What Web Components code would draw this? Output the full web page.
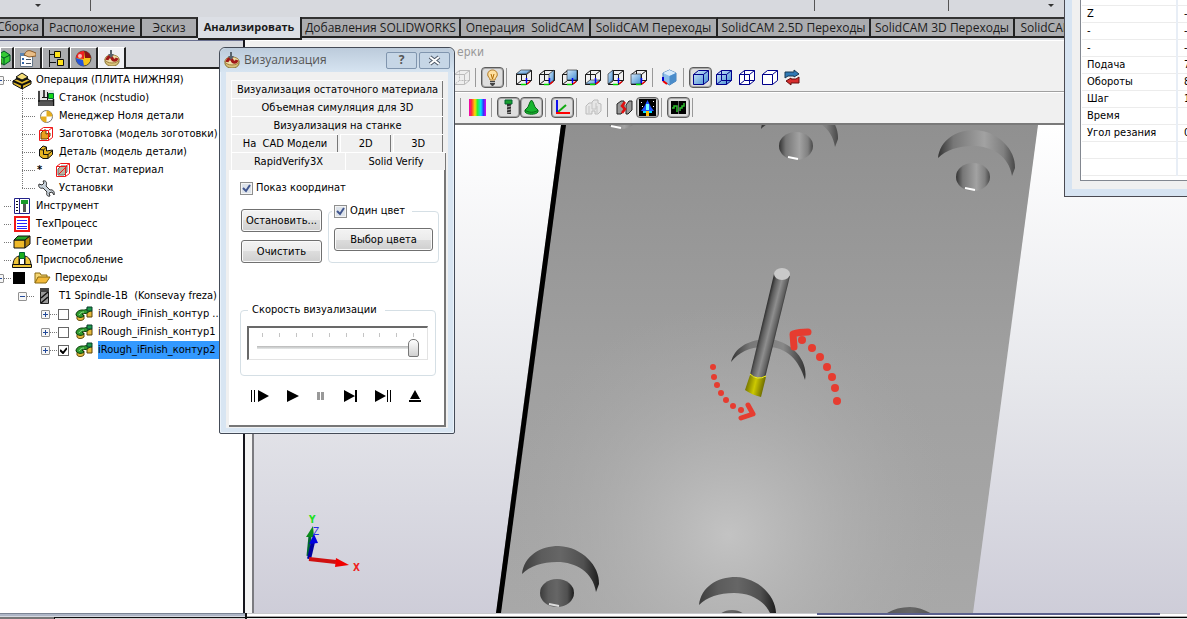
<!DOCTYPE html>
<html lang="ru">
<head>
<meta charset="utf-8">
<title>SolidCAM</title>
<style>
html,body{margin:0;height:100%}
body{font:11px/18px "DejaVu Sans Condensed","DejaVu Sans",sans-serif;color:#000;background:#f0f0f0;overflow:hidden}
</style>
</head>
<body>
<cam-app></cam-app>
<script>
const S=(w,h,body)=>`<svg xmlns="http://www.w3.org/2000/svg" width="${w}" height="${h}" viewBox="0 0 ${w} ${h}" aria-hidden="true">${body}</svg>`;
const FACES={top:'1,5 6,1 16,1 11,5',right:'11,5 16,1 16,11 11,15',back:'6,1 16,1 16,11 6,11',bottom:'1,15 6,11 16,11 11,15',left:'1,5 6,1 6,11 1,15',front:'1,5 11,5 11,15 1,15'};
const GB='<linearGradient id="g" x1="0" y1="0" x2="1" y2="1"><stop offset="0" stop-color="#d4e9fb"/><stop offset="1" stop-color="#3f8bd0"/></linearGradient>';
const view=f=>S(17,17,`${GB}<path d="M1.500 5.500H11.500V15.500H1.500ZM6.500 1.500H16.500V11.500H6.500ZM1.500 5.500L6.500 1.500M11.500 5.500L16.500 1.500M1.500 15.500L6.500 11.500M11.500 15.500L16.500 11.500" fill="none" stroke="#1a1a1a"/><polygon points="${FACES[f]}" fill="url(#g)" stroke="#1a1a1a" stroke-width=".6"/><path d="M11.500 14V9" stroke="#00f" stroke-width="1.500"/><path d="M6 15.500H11" stroke="#0d0" stroke-width="1.500"/><path d="M12 15L15 12.500" stroke="#e00" stroke-width="1.500"/>`);
const shaded=(fill,inner,line='#00008b')=>S(17,17,`${GB}<path d="M1.500 5.500L6.500 1.500H16.500V11.500L11.500 15.500H1.500Z" fill="${fill}"/><path d="M1.500 5.500L6.500 1.500H16.500V11.500L11.500 15.500H1.500ZM1.500 5.500H11.500V15.500M11.500 5.500L16.500 1.500" fill="none" stroke="${line}"/>${inner?`<path d="M6.500 1.500V11.500H16.500M6.500 11.500L1.500 15.500" fill="none" stroke="${line}" ${inner==2?'stroke-dasharray="2 1"':''}/>`:''}`);
const PART='<path d="M1 9V12C2 15 5 16 8 16C11 16 14 15 15 12V9Z" fill="#d9c27a" stroke="#8a7434"/><ellipse cx="8" cy="9" rx="7" ry="4" fill="#efe0a8" stroke="#a08040"/><path d="M3 10C4 6 7 6 8 8C9 11 12 11 13 8" fill="none" stroke="#a01818" stroke-width="3"/><path d="M6 0H8V4H10L7 8L4 4H6Z" fill="#59636b"/>';
const MILL='<path d="M2 8V13C3 15 7 15 9 13V9Z" fill="#e3b83c" stroke="#5a4408"/><path d="M12 5H17V11H12Z" fill="#e3b83c" stroke="#5a4408"/><path d="M1 9C1 6 4 4 7 4C9 4 10 4 12 3L15 5L12 7C11 8 9 7 7 8L9 10C7 12 3 12 1 9Z" fill="#2f9a2f" stroke="#0b3d0b"/><path d="M12 1H17V5H12Z" fill="#1d9a4a" stroke="#0b3d2b"/><path d="M4 9C5 7 7 6 9 6" fill="none" stroke="#8fe08f"/>';
const ICON={
 part:S(16,16,PART),
 cubes:S(16,16,'<path d="M2 5L8 1L14 5V11L8 15L2 11Z" fill="#35c935" stroke="#052"/><path d="M2 5L8 8L14 5M8 8V15" stroke="#052" fill="none"/><path d="M0 6L5 9V15L0 12Z" fill="#f5d21c" stroke="#440"/>'),
 props:S(17,17,'<path d="M1.500 3.500H13.500V16.500H1.500Z" fill="#fff" stroke="#678"/><path d="M1 3H14V6H1Z" fill="#5b86b5"/><path d="M3 8H5V10H3ZM3 12H5V14H3Z" fill="#36a"/><path d="M7 9.500H12M7 13.500H12" stroke="#456"/><path d="M5 5C7 1 9 0 12 1L17 3V6L10 7Z" fill="#e9bd86" stroke="#8a5a28"/>'),
 tree:S(18,17,'<path d="M2.500 0V17M2.500 4.500H8M2.500 12.500H9" stroke="#111" fill="none"/><path d="M7.500 1.500H13.500V7.500H7.500ZM10.500 9.500H16.500V15.500H10.500Z" fill="#ffe21c" stroke="#111"/>'),
 ball:S(17,17,'<circle cx="8.500" cy="8.500" r="7.500" fill="#f5c518" stroke="#444"/><path d="M1 8A7.500 7.500 0 0 1 9 1V9Z" fill="#e22"/><path d="M1 8L8 10L9 16A7.500 7.500 0 0 1 1 8Z" fill="#2554d8"/><path d="M9 1A7.500 7.500 0 0 1 16 8L10 8Z" fill="#8b1212"/><circle cx="5" cy="6" r="2" fill="#fff" opacity=".7"/>'),
 op:S(20,17,'<path d="M1 9L10 4L19 9V12L10 17L1 12Z" fill="#e0b92c" stroke="#111"/><path d="M1 9L10 13L19 9M4 6L10 9L16 6" fill="none" stroke="#111" stroke-width="2"/><path d="M4 5L10 1L16 5L10 8Z" fill="#f4dd78" stroke="#111"/><path d="M10 13V17" stroke="#111" stroke-width="2"/>'),
 machine:S(17,17,'<path d="M0 0H16V11H0Z" fill="#e4e4e4"/><path d="M1 1V16M15.500 9V16M0 11H16M6 0V8" stroke="#111" stroke-width="1.500"/><path d="M1 12H15V16H1Z" fill="#555"/><path d="M4 7.500H9M9.500 2V10" stroke="#111"/><path d="M10.500 3.500H15.500V8.500H10.500Z" fill="#16d916" stroke="#063"/>'),
 zero:S(17,17,'<circle cx="8.500" cy="8.500" r="6" fill="#fff" stroke="#777"/><path d="M8.500 8.500V2.500A6 6 0 0 1 14.500 8.500ZM8.500 8.500V14.500A6 6 0 0 1 2.500 8.500Z" fill="#e5ad1e"/>'),
 stock:S(16,16,'<path d="M3 7L6 4H8V8L12 7V10L9 13H3Z" fill="#e8a020" stroke="#6b3b00"/><path d="M1.500 4.500L5.500 1.500H14.500V11.500L10.500 14.500H1.500ZM1.500 4.500H10.500V14.500M10.500 4.500L14.500 1.500" fill="none" stroke="#f01818"/>'),
 rest:S(16,16,'<path d="M3 7L6 4H12V10L9 13H3Z" fill="#b9b5a2" stroke="#666"/><path d="M1.500 4.500L5.500 1.500H14.500V11.500L10.500 14.500H1.500ZM1.500 4.500H10.500V14.500M10.500 4.500L14.500 1.500M4 12L12 4" fill="none" stroke="#f01818"/>'),
 detail:S(16,16,'<path d="M1.500 5.500L5 2L8.500 3V7L14.500 6V10.500L10 14.500H5L1.500 12Z" fill="#e6b422" stroke="#111"/><path d="M1.500 5.500L5.500 6V10.500H10V14M5.500 6L8.500 3M10 10.500L14.500 6.500" fill="none" stroke="#111"/>'),
 wrench:S(17,17,'<path d="M1 4L4 5L6 3L5 1C9 0 9 4 8 6L12 10C15 9 17 12 16 15L14 12L11 13L12 16C9 17 8 14 9 12L5 8C2 9 0 7 1 4Z" fill="#c9d3db" stroke="#333"/>'),
 tools:S(16,16,'<path d="M.5.500H15.500V15.500H.5Z" fill="#fff" stroke="#22228a"/><path d="M5.500 0V16" stroke="#22228a"/><path d="M2 3.500H4M2 6.500H4M2 9.500H4M2 12.500H4" stroke="#111"/><path d="M7 2H14V6H7Z" fill="#1a9b2a"/><path d="M9 6H12V14H9Z" fill="#555"/>'),
 process:S(16,16,'<path d="M1 1H15V15H1Z" fill="#fff" stroke="#f01818" stroke-width="2"/><path d="M3 4.500H13M3 7.500H13M3 10.500H13M3 12.500H13" stroke="#22f"/>'),
 geom:S(18,14,'<path d="M1 5H12V13H1Z" fill="#efb92a" stroke="#111"/><path d="M1 5L5 1H17L12 5Z" fill="#25a425" stroke="#111"/><path d="M12 5L17 1V9L12 13Z" fill="#b8860b" stroke="#111"/>'),
 fixture:S(20,16,'<path d="M1 14C1 8 3 5 7 4V14ZM19 14C19 8 17 5 13 4V14Z" fill="#efc63a" stroke="#111"/><path d="M.5 12.500H19.500V15.500H.5Z" fill="#efc63a" stroke="#111"/><path d="M7.500 5.500H12.500V12.500H7.500Z" fill="#fff" stroke="#111"/><path d="M7.500.500H12.500V6.500H7.500Z" fill="#1cae1c" stroke="#063"/>'),
 folder:S(17,14,'<path d="M1 12V2H6L7 4H13V6" fill="#f7d774" stroke="#8a6a10"/><path d="M1 12L4 6H16L12 12Z" fill="#f2b93a" stroke="#8a6a10"/>'),
 cutter:S(10,16,'<path d="M.5.500H8.500V15.500H.5Z" fill="#999" stroke="#222"/><path d="M0 0H9V4H0Z" fill="#444"/><path d="M1 10L8 4M1 15L8 9" stroke="#111" stroke-width="1.500"/>'),
 mill:S(18,16,MILL),
 bulb:S(17,17,'<path d="M8.500 1C12 1 14 4 13 7C12 9 11 9 11 11H6C6 9 5 9 4 7C3 4 5 1 8.500 1Z" fill="#ffe0a0" stroke="#b07820"/><path d="M7 5L8.500 10L10 5" fill="none" stroke="#b06a00"/><path d="M6 12H11V15L9 17H8L6 15Z" fill="#444"/><path d="M6 13.500H11" stroke="#bbb"/>'),
 iso:S(17,17,'<path d="M8.500 1L15 4V12L8.500 16L2 12V4Z" fill="#8cbeea" stroke="#4a80b8"/><path d="M2 4L8.500 7L15 4L8.500 1Z" fill="#d7ebfc"/><path d="M8.500 7L15 4V12L8.500 16Z" fill="#4a8cca"/><path d="M2 12L6 15" stroke="#e00" stroke-width="2"/><path d="M2 8V12" stroke="#00c" stroke-width="2"/>'),
 swap:S(17,17,'<path d="M1 3H10V1L15 5L10 8V7H4L1 9Z" fill="#2f79b5" stroke="#1b3a55"/><path d="M15 14H7V16L2 12L7 9V10H12L15 8Z" fill="#d82c2c" stroke="#611"/>'),
 ghost:shaded('#eee',2,'#bbb'),
 shade:shaded('url(#g)',0),shadeEdge:shaded('url(#g)',1),wire:shaded('#fff',1),hide:shaded('#fff',0),
 rainbow:S(17,17,'<defs><linearGradient id="r"><stop offset="0" stop-color="#e0b"/><stop offset=".15" stop-color="#f33"/><stop offset=".35" stop-color="#fd0"/><stop offset=".5" stop-color="#3e3"/><stop offset=".7" stop-color="#0df"/><stop offset=".85" stop-color="#33f"/><stop offset="1" stop-color="#d0e"/></linearGradient></defs><path d="M0 0H17V17H0Z" fill="url(#r)"/>'),
 bolt:S(17,17,'<path d="M5 1H12V5H5Z" fill="#1b9e2f" stroke="#063"/><path d="M7 5H11V15H7Z" fill="#333"/><path d="M7 8L11 7M7 11L11 10M7 14L11 13" stroke="#aaa"/>'),
 cone:S(17,17,'<path d="M8.500 1L10 3L12 8L15 11V13C13 16 4 16 2 13V11L5 8L7 3Z" fill="#17b52f" stroke="#076b17"/><path d="M2 11C5 14 12 14 15 11" fill="none" stroke="#076b17"/>'),
 axes:S(17,17,'<path d="M4 13L12 6" stroke="#1a1" stroke-width="2"/><path d="M3 1V14" stroke="#11e" stroke-width="2"/><path d="M2 14H16" stroke="#f00" stroke-width="2"/>'),
 blocks:S(17,17,'<path d="M1 7L4 4H7V3L9 1H13V4L16 5V12L13 15H10V12H7V15H1Z" fill="#e6e6e6" stroke="#bbb"/><path d="M4 7V14M7 4V10H11V4M12 7V14" fill="none" stroke="#c4c4c4"/>'),
 compare:S(17,17,'<path d="M1 5L5 2H8V11L5 15H1Z" fill="#999" stroke="#222"/><path d="M10 6L13 2H16V11L12 15H10Z" fill="#999" stroke="#222"/><path d="M9 3L6 7L9 10L6 14" fill="none" stroke="#e01010" stroke-width="2.500"/>'),
 rocket:S(17,17,'<path d="M0 0H17V17H0Z" fill="#000"/><path d="M8.500 1L12 8L15 12H2L5 8Z" fill="#1d50ff"/><path d="M7 5H10V11H7Z" fill="#7ff"/><path d="M4 12H7V14H4ZM10 12H13V14H10Z" fill="#0df"/><path d="M7 12H10V17H7Z" fill="#fb0"/><path d="M2 3H3V4H2ZM14 2H15V3H14ZM3 7H4V8H3ZM14 7H15V8H14Z" fill="#fff"/>'),
 graph:S(17,17,'<path d="M1 2H16V15H1Z" fill="#000"/><path d="M2 9H4V7H7V13M10 12V9H12V7H14V4" fill="none" stroke="#2cbf2c" stroke-width="1.500"/><path d="M8.500 2V15" stroke="#666"/>')
};
['top','right','back','bottom','left','front'].forEach(f=>ICON['v-'+f]=view(f));

function define(name,html,setup){
  const t=document.createElement('template');t.innerHTML=html;
  customElements.define(name,class extends HTMLElement{
    constructor(){super();this.attachShadow({mode:'open'}).append(t.content.cloneNode(true));}
    connectedCallback(){if(setup&&!this.ready){this.ready=true;setup(this,this.shadowRoot);}}
  });
}

define('cam-icon','<style>:host{display:inline-flex;align-items:center;justify-content:center;flex:none}svg{display:block}</style><span></span>',(h,r)=>{r.querySelector('span').innerHTML=ICON[h.getAttribute('name')]||'';});

/* top ribbon and its page tabs */
define('cam-ribbon',`<style>
:host{display:block;background:#d7d9de}
.band{display:flex;height:17px}
.drop{width:8px;margin-left:auto;height:10px;display:flex;align-items:center}
.drop::after{content:"";border:3px solid transparent;border-top-color:#333;border-bottom:0}
.part{border-right:1px solid #555;height:11px;box-sizing:border-box}
nav{display:flex;height:23px;font:12px/17px "Open Sans",sans-serif;box-shadow:inset 0 1px #9a9ca2}
button{font:inherit;color:#1b1b1b;white-space:nowrap;flex:none;height:21px;margin:0;padding:0 0 2px;background:#abacaf;border:0;border-top:2px solid #333;border-bottom:2px solid #222;border-right:2px solid #222;overflow:hidden}
button.first{display:flex;justify-content:flex-end;align-items:center;padding-right:3px}
button[aria-selected=true]{font-size:11px;font-weight:bold;background:#dcdfe5;height:23px;border-top:0}
</style>
<div class="band"><span class="part" style="width:91px;display:flex"><span class="drop" style="margin-left:35px"></span></span><span class="part" style="width:724px"></span><span class="part" style="width:134px"></span><span style="width:107px;display:flex"><span class="drop"></span></span></div>
<nav role="tablist"></nav>`,(h,r)=>{
 [['Сборка',44],['Расположение',98],['Эскиз',56],['Анализировать',104],['Добавления SOLIDWORKS',159],['Операция\u00a0 SolidCAM',130],['SolidCAM Переходы',127],['SolidCAM 2.5D Переходы',153],['SolidCAM 3D Переходы',144],['SolidCAM',66]].forEach(([t,w],i)=>{
  const b=document.createElement('button');b.textContent=t;b.style.width=w+'px';b.setAttribute('role','tab');b.setAttribute('aria-selected',i==3);
  if(!i)b.className='first';
  r.querySelector('nav').append(b);});
});

define('tool-button',`<style>
:host{display:block;flex:none}
button{display:flex;align-items:center;justify-content:center;width:23px;height:21px;padding:0;border:1px solid transparent;border-radius:4px;background:none}
:host([on]) button{border-color:#5c5c5c;background:#dedede;box-shadow:inset 0 0 0 1px #a8a8a8}
</style><button></button>`,(h,r)=>{
 const b=r.querySelector('button'),c=document.createElement('cam-icon');
 c.setAttribute('name',h.getAttribute('icon'));b.append(c);b.setAttribute('aria-label',h.getAttribute('label'));});

define('cam-toolbars',`<style>
:host{display:block;background:#f0f0f0;border-top:1px solid #fff;border-bottom:2px solid #7a7a7a}
.title{height:23px;padding:0 0 0 207px;font:12px/23px "DejaVu Sans Condensed",sans-serif;color:#999}
.row{display:flex;align-items:center;height:27px;padding-left:200px;border-bottom:1px solid #a0a0a0;box-shadow:0 1px #fff}
.row+.row{height:31px;padding-left:208px;border:0;box-shadow:none}
i{width:8px;height:19px;flex:none;background:linear-gradient(#999,#999) 2px 0/1px 100% no-repeat}
</style><div class="title">ерки</div><div class="row"></div><div class="row"></div>`,(h,r)=>{
 const rows=[['ghost','|','*bulb','|','v-top','v-right','v-back','v-bottom','v-left','v-front','|','iso','|','*shade','shadeEdge','wire','hide','swap'],
 ['|','rainbow','|','*bolt','*cone','|','*axes','|','blocks','|','compare','*rocket','|','*graph','|']];
 r.querySelectorAll('.row').forEach((el,k)=>rows[k].forEach(n=>{
  if(n=='|')return el.append(document.createElement('i'));
  const b=document.createElement('tool-button');if(n[0]=='*'){b.setAttribute('on','');n=n.slice(1);}
  b.setAttribute('icon',n);b.setAttribute('label',n);el.append(b);}));
});

/* one line of the operations tree */
define('tree-row',`<style>
:host{display:flex;align-items:center;height:18px;white-space:pre}
.branch{width:15px;height:18px;flex:none;background:repeating-linear-gradient(#777 0 1px,transparent 1px 2px) 0 0/1px 100% no-repeat,repeating-linear-gradient(90deg,#777 0 1px,transparent 1px 2px) 0 9px/14px 1px no-repeat}
:host([last]) .branch{background-size:1px 10px,14px 1px}
.dots{width:8px;height:1px;flex:none;background:repeating-linear-gradient(90deg,#777 0 1px,transparent 1px 2px)}
.exp{width:9px;height:9px;box-sizing:border-box;flex:none;border:1px solid #919191;border-radius:1px;background:linear-gradient(#234a9a,#234a9a) center/5px 1px no-repeat,#f6f6f6}
.exp.plus{background:linear-gradient(#234a9a,#234a9a) center/5px 1px no-repeat,linear-gradient(#234a9a,#234a9a) center/1px 5px no-repeat,#f6f6f6}
cam-icon{width:18px;margin-right:4px}
cam-icon.w20{width:20px}
.sq{width:12px;height:12px;background:#000;margin:0 8px 0 1px;flex:none}
.box{position:relative;display:flex;flex:none;margin-right:6px}
.box svg{position:absolute;left:2px;top:2px;display:none;pointer-events:none}
input{appearance:none;box-sizing:border-box;width:11px;height:11px;margin:0;border:1px solid #666;background:#fff}
input:checked+svg{display:block}
.star{width:17px;font-weight:bold;flex:none}
:host([selected]) .text{background:#3399ff}
.text{flex:1}
:host([kind=op]) cam-icon{margin-right:5px}
</style><span class="lead" style="display:contents"></span><span class="text"><slot></slot></span>`,(h,r)=>{
 const L=r.querySelector('.lead'),k=h.getAttribute('kind'),ic=h.getAttribute('icon');
 const icon=(c='')=>`<cam-icon name="${ic}" class="${c}"></cam-icon>`;
 const pad={root:-5,leaf:4,child:22,star:22,tool:18,op:41}[k]||0;
 h.style.paddingLeft=Math.max(pad,0)+'px';if(pad<0)h.style.marginLeft=pad+'px';
 L.innerHTML={root:'<span class="exp"></span><span class="dots"></span>'+(h.hasAttribute('box')?'<span class="sq"></span>'+icon():icon('w20')),
  leaf:'<span class="dots"></span>'+icon('w20'),
  child:'<span class="branch"></span>'+icon(),
  star:'<span class="branch"></span><span class="star">*</span>'+icon(),
  tool:'<span class="exp"></span><span class="dots"></span>'+icon('w20'),
  op:`<span class="exp plus"></span><span class="dots"></span><span class="box"><input type="checkbox" aria-label="${h.textContent}" ${h.hasAttribute('selected')?'checked':''}>${S(7,7,'<path d="M0 3L3 6L7 1" fill="none" stroke="#000" stroke-width="2"/>')}</span>`+icon()}[k];
});

define('cam-tree',`<style>
:host{display:flex;flex-direction:column;background:#fff;border-right:2px solid #15151c;overflow:hidden;box-sizing:border-box}
.tabs{display:flex;height:29px;box-sizing:border-box;padding-top:6px;background:#d7d9de;border-top:1px solid #6a7090;border-bottom:2px solid #222}
.tabs button{width:28px;box-sizing:border-box;height:21px;padding:0;display:flex;justify-content:center;align-items:center;background:#abacaf;border:1px solid #fff;border-right:2px solid #222;border-bottom:0}
.tabs button:first-child{width:14px;overflow:hidden;justify-content:flex-end}
.tabs button:last-child{background:#f0f1f4}
.rows{flex:1;padding-top:2px}
</style><div class="tabs"><button aria-label="Дерево"><cam-icon name="cubes"></cam-icon></button><button aria-label="Свойства"><cam-icon name="props"></cam-icon></button><button aria-label="Конфигурации"><cam-icon name="tree"></cam-icon></button><button aria-label="Вид"><cam-icon name="ball"></cam-icon></button><button aria-label="SolidCAM"><cam-icon name="part"></cam-icon></button></div>
<div class="rows">
<tree-row kind="root" icon="op">Операция (ПЛИТА НИЖНЯЯ)</tree-row>
<tree-row kind="child" icon="machine">Станок (ncstudio)</tree-row>
<tree-row kind="child" icon="zero">Менеджер Ноля детали</tree-row>
<tree-row kind="child" icon="stock">Заготовка (модель зоготовки)</tree-row>
<tree-row kind="child" icon="detail">Деталь (модель детали)</tree-row>
<tree-row kind="star" icon="rest">Остат. материал</tree-row>
<tree-row kind="child" last icon="wrench">Установки</tree-row>
<tree-row kind="leaf" icon="tools">Инструмент</tree-row>
<tree-row kind="leaf" icon="process">ТехПроцесс</tree-row>
<tree-row kind="leaf" icon="geom">Геометрии</tree-row>
<tree-row kind="leaf" icon="fixture">Приспособление</tree-row>
<tree-row kind="root" box icon="folder">Переходы</tree-row>
<tree-row kind="tool" icon="cutter">T1 Spindle-1B  (Konsevay freza)</tree-row>
<tree-row kind="op" icon="mill">iRough_iFinish_контур ..</tree-row>
<tree-row kind="op" icon="mill">iRough_iFinish_контур1 .</tree-row>
<tree-row kind="op" selected icon="mill">iRough_iFinish_контур2 .</tree-row>
</div>`);

/* graphics area: plate, bores, tool and direction arrows */
define('cam-viewport',`<style>:host{display:block;min-height:0;overflow:hidden;border-left:2px solid #7b7b80;background:#d2d3dc}svg{display:block;width:100%;height:100%}</style>
<svg viewBox="255 125 933 488" preserveAspectRatio="xMinYMin slice" role="img" aria-label="Модель плиты">
<defs>
<linearGradient id="bg" x1="0" y1="0" x2="0" y2="1"><stop offset="0" stop-color="#fff"/><stop offset=".5" stop-color="#e7e8ec"/><stop offset="1" stop-color="#cccbd7"/></linearGradient>
<linearGradient id="pl" x1="0" y1="0" x2="0" y2="1"><stop offset="0" stop-color="#909090"/><stop offset=".5" stop-color="#a0a0a0"/><stop offset="1" stop-color="#a8a8a8"/></linearGradient>
<radialGradient id="hl" gradientUnits="userSpaceOnUse" cx="730" cy="535" r="230"><stop offset="0" stop-color="#c3c3c3"/><stop offset=".4" stop-color="#b6b6b6" stop-opacity=".7"/><stop offset="1" stop-color="#a8a8a8" stop-opacity="0"/></radialGradient>
<linearGradient id="c1"><stop offset="0" stop-color="#333"/><stop offset=".2" stop-color="#777"/><stop offset=".6" stop-color="#a2a2a2"/><stop offset=".85" stop-color="#808080"/><stop offset="1" stop-color="#484848"/></linearGradient>
<linearGradient id="c2"><stop offset="0" stop-color="#3c3c3c"/><stop offset=".25" stop-color="#5c5c5c"/><stop offset=".5" stop-color="#666"/><stop offset=".8" stop-color="#505050"/><stop offset="1" stop-color="#1c1c1c"/></linearGradient>
<linearGradient id="c3"><stop offset="0" stop-color="#333"/><stop offset=".25" stop-color="#777"/><stop offset=".7" stop-color="#888"/><stop offset="1" stop-color="#333"/></linearGradient>
<linearGradient id="sh" gradientUnits="userSpaceOnUse" x1="763" y1="325" x2="779" y2="329"><stop offset="0" stop-color="#333"/><stop offset=".15" stop-color="#5a5a5a"/><stop offset=".5" stop-color="#8e8e8e"/><stop offset=".85" stop-color="#5c5c5c"/><stop offset="1" stop-color="#222"/></linearGradient>
<linearGradient id="ye" gradientUnits="userSpaceOnUse" x1="748" y1="384" x2="765" y2="388"><stop offset="0" stop-color="#7a7a00"/><stop offset=".45" stop-color="#cdc900"/><stop offset="1" stop-color="#6a6800"/></linearGradient>
<path id="cr" d="M0 28C2 10 18 0 37 0C60 1 78 20 77 38L74 46C71 26 54 16 35 16C20 16 8 20 0 28Z"/>
</defs>
<path d="M252 125H1200V630H252Z" fill="url(#bg)"/>
<path d="M562 125H1039L974 613H497Z" fill="url(#pl)"/><path d="M562 125H1039L974 613H497Z" fill="url(#hl)"/>
<path d="M562 125H567L502 613H497Z" fill="#000"/>
<use href="#cr" x="939" y="130" fill="url(#c1)"/><use href="#cr" x="762" y="101" fill="url(#c1)"/>
<use href="#cr" x="523" y="546" fill="url(#c2)"/><use href="#cr" x="700" y="577" fill="url(#c2)"/><use href="#cr" x="874" y="607" fill="url(#c2)"/>
<g fill="url(#c1)"><ellipse cx="974" cy="177" rx="17" ry="14"/><ellipse cx="797" cy="146" rx="17" ry="14"/><ellipse cx="622" cy="115" rx="17" ry="14"/></g>
<g fill="url(#c2)"><ellipse cx="558" cy="593" rx="17" ry="14"/><ellipse cx="733" cy="624" rx="17" ry="14"/></g>
<path d="M966 188L976 190M789 157L799 159M612 126L622 128" stroke="#fff" stroke-width="2"/><path d="M550 604L560 606" stroke="#ddd" stroke-width="2"/>
<path d="M732 362C736 346 752 339 770 339C792 341 810 360 806 380C800 360 788 347 768 347C752 346 740 352 732 362Z" fill="url(#c3)"/>
<path d="M775 274L751 375Q758 381 766 378L791 276Z" fill="url(#sh)"/>
<path d="M751 375Q758 381 767 377L762 397Q753 395 746 390Z" fill="url(#ye)"/><path d="M751 374Q758 381 767 376" fill="none" stroke="#ff0"/>
<ellipse cx="783" cy="274" rx="8" ry="6" fill="#c9c9c9"/>
<g fill="#e63c30"><circle cx="838" cy="401" r="4"/><circle cx="836" cy="388" r="4"/><circle cx="833" cy="377" r="4"/><circle cx="828" cy="367" r="4"/><circle cx="821" cy="357" r="4"/><circle cx="813" cy="348" r="4"/><circle cx="803" cy="340" r="4"/>
<circle cx="714" cy="367" r="3"/><circle cx="715" cy="377" r="3"/><circle cx="718" cy="385" r="3"/><circle cx="722" cy="393" r="3"/><circle cx="727" cy="400" r="3"/><circle cx="734" cy="406" r="3"/><circle cx="742" cy="410" r="3"/></g>
<g fill="none" stroke="#e63c30" stroke-linecap="round" stroke-linejoin="round"><path d="M795 347L794 334Q800 332 809 332" stroke-width="7"/><path d="M749 405L754 414L742 418" stroke-width="5"/></g>
<path d="M309 556L311 536" stroke="#063" stroke-width="3"/><path d="M307 537L314 526L315 537Z" fill="#0a8a1a"/><path d="M310 559L314 542" stroke="#0000a0" stroke-width="4"/><path d="M310 544L315 534L319 543Z" fill="#0000e0"/><path d="M310 559L337 562" stroke="#d01010" stroke-width="4"/><path d="M337 558L350 565L336 567Z" fill="#f00000"/>
<g font-family="DejaVu Sans Condensed,sans-serif" font-size="10" font-weight="bold"><text x="310" y="523" fill="#1fe01f">Y</text><text x="314" y="535" fill="#2a2ae8" font-weight="normal">Z</text><text x="354" y="571" fill="#f02020">X</text></g>
</svg>`);

define('win-button',`<style>
:host{display:block}
button{font:inherit;line-height:18px;width:100%;height:23px;padding:0;white-space:nowrap;color:#000;border:1px solid #707070;border-radius:3px;background:linear-gradient(#f3f3f3,#ebebeb 50%,#ddd 50%,#cfcfcf);box-shadow:inset 0 0 0 1px #fafafa}
</style><button><slot></slot></button>`);

define('win-check',`<style>
:host{display:inline-block}
label{display:flex;align-items:center;height:14px;white-space:nowrap}
input{appearance:none;box-sizing:border-box;width:13px;height:13px;margin:0 3px 0 0;border:1px solid #8e8f8f;box-shadow:inset 0 0 0 1px #f4f4f4;background:#dde3ea}
.box{position:relative;display:flex}.box svg{position:absolute;left:2px;top:2px;pointer-events:none}
</style><label><span class="box"><input type="checkbox" checked>${S(9,9,'<path d="M1 4L4 7L8 1" fill="none" stroke="#41568f" stroke-width="2"/>')}</span><slot></slot></label>`);

define('win-group',`<style>
:host{display:block}
fieldset{margin:0;padding:0;border:1px solid #d5dfe5;border-radius:4px;min-width:0;height:100%;box-sizing:border-box}
legend{height:14px;line-height:14px;padding:0 7px 0 2px;margin-left:3px}
:host([wide]) legend{padding:0 8px 0 4px;margin-left:7px}
</style><fieldset><legend><slot name="legend"></slot></legend><slot></slot></fieldset>`);

define('visual-dialog',`<style>
:host{display:flex;flex-direction:column;box-sizing:border-box;width:236px;height:387px;border:1px solid #444b57;border-radius:6px 6px 2px 2px;background:#d8e5f2;box-shadow:inset 0 0 0 1px #eaf2fa}
header{display:flex;align-items:center;height:24px;padding:0 4px;border-radius:6px 6px 0 0;background:linear-gradient(#bccbdb,#d6e4f1);font:12px/18px "Open Sans",sans-serif;color:#555}
h2{flex:1;font:inherit;margin:0 0 0 4px}
header button{width:31px;height:17px;margin-left:2px;padding:0;display:flex;align-items:center;justify-content:center;border:1px solid #8095ae;border-radius:2px;background:#c6d6e6;font:bold 12px/14px "Open Sans",sans-serif;color:#555}
.body{flex:1;display:flex;flex-direction:column;margin:0 6px 5px;padding:8px 2px 1px 3px;background:#f0f0f0}
.tabs{display:flex;height:18px;padding:0 3px 0 2px;gap:2px}
.tabs button{font:inherit;line-height:16px;margin:0;padding:0;height:18px;white-space:nowrap;background:#f0f0f0;color:#000;border:0;border-top:1px solid #fff;border-left:1px solid #fff;box-shadow:inset -1px 0 #777;flex:1}
.tabs.front{padding:0 0 0 2px;gap:0}
.tabs.front button{box-shadow:none}
.tabs.front button:last-child{box-shadow:inset -1px 0 #777;flex:0 0 101px}
.page{flex:1;background:#fff;border-right:2px solid #777;border-bottom:2px solid #777;padding:11px 10px 0 11px;display:flex;flex-direction:column}
.cols{display:grid;grid-template-columns:81px 111px;column-gap:6px;height:54px;margin:9px 0 0 1px}
.cols>div{display:grid;gap:8px;align-content:start;padding-top:5px}
.one{margin:10px 5px 0}
.speed{height:73px;margin-top:45px;width:196px}
.track{margin:9px 7px 0 6px;height:31px;border:1px solid #e3e3e3;border-top:2px solid #696969;border-left:2px solid #696969;display:flex;flex-direction:column}
.ticks{display:flex;justify-content:space-between;margin:5px 13px 0 13px;height:4px}.ticks i{width:1px;background:#c4c4c4}
input[type=range]{appearance:none;margin:1px 8px 0 8px;height:20px;background:linear-gradient(#b8b8b8,#e7eaea) 0 8px/100% 3px no-repeat}
input[type=range]::-webkit-slider-thumb{appearance:none;width:11px;height:18px;border:1px solid #777;border-radius:5px 5px 2px 2px;background:linear-gradient(#fff,#d0d0d0)}
.play{display:flex;justify-content:space-between;margin:12px 13px 0 11px}
.play button{border:0;background:none;padding:0;height:16px;display:flex;align-items:center}
</style>
<header><cam-icon name="part"></cam-icon><h2>Визуализация</h2><button aria-label="Справка">?</button><button aria-label="Закрыть">${S(13,11,'<path d="M2 2L11 9M11 2L2 9" stroke="#4d5867" stroke-width="4"/><path d="M2 2L11 9M11 2L2 9" stroke="#fff" stroke-width="2"/>')}</button></header>
<div class="body">
<div class="tabs"><button>Визуализация остаточного материала</button></div>
<div class="tabs"><button>Объемная симуляция для 3D</button></div>
<div class="tabs"><button>Визуализация на станке</button></div>
<div class="tabs"><button style="flex:0 0 107px">На&nbsp; CAD Модели</button><button>2D</button><button>3D</button></div>
<div class="tabs front"><button>RapidVerify3X</button><button>Solid Verify</button></div>
<div class="page">
<win-check>Показ координат</win-check>
<div class="cols"><div><win-button>Остановить...</win-button><win-button>Очистить</win-button></div>
<win-group><win-check slot="legend">Один цвет</win-check><win-button class="one">Выбор цвета</win-button></win-group></div>
<win-group class="speed" wide><span slot="legend">Скорость визуализации</span>
<div class="track"><div class="ticks"><i></i><i></i><i></i><i></i><i></i><i></i><i></i><i></i><i></i><i></i></div><input type="range" min="0" max="9" value="9" aria-label="Скорость визуализации"></div></win-group>
<div class="play">
<button aria-label="По шагам">${S(18,12,'<path d="M.5 0V12M3.500 0V12" stroke="#000"/><path d="M7 0L18 6L7 12Z"/>')}</button>
<button aria-label="Пуск">${S(12,12,'<path d="M0 0L12 6L0 12Z"/>')}</button>
<button aria-label="Пауза">${S(8,8,'<path d="M0 0H3V8H0ZM4 0H7V8H4Z" fill="#999"/>')}</button>
<button aria-label="До конца">${S(13,12,'<path d="M0 0L11 6L0 12ZM11 0H13V12H11Z"/>')}</button>
<button aria-label="До операции">${S(16,12,'<path d="M0 0L11 6L0 12Z"/><path d="M12.500 0V12M15.500 0V12" stroke="#000"/>')}</button>
<button aria-label="Извлечь">${S(12,12,'<path d="M6 0L11 9H1ZM0 10H12V12H0Z"/>')}</button>
</div></div></div>`);

define('info-window',`<style>
:host{display:block;box-sizing:border-box;width:123px;border:1px solid #4a4a52;border-right:0;background:#d7e4f2;padding:0 0 7px 7px;overflow:hidden}
.in{background:#f0f0f0;padding:0 0 8px 8px}
.list{border:1px solid #828790;border-right:0;border-top:0;background:#fff;padding:0 0 4px 1px}
table{border-collapse:collapse;width:100%;table-layout:fixed}
td{height:16px;line-height:16px;padding:0 0 0 5px;border-bottom:1px solid #ececec;white-space:nowrap;overflow:hidden}
td:first-child{width:89px;border-right:2px solid #e8eef6}
td+td{padding-left:6px}
</style><div class="in"><div class="list"><table></table></div></div>`,(h,r)=>{
 r.querySelector('table').innerHTML=[['Y','-'],['Z','-'],['-','-'],['-','-'],['Подача','7'],['Обороты','8'],['Шаг','1'],['Время',''],['Угол резания','0'],['',''],['','']].map(x=>`<tr><td>${x[0]}</td><td>${x[1]}</td></tr>`).join('');
});

define('cam-app',`<style>
:host{display:grid;grid-template-rows:auto 1fr 6px;height:100vh;position:relative;overflow:hidden}
main{display:grid;grid-template-columns:245px 1fr;min-height:0}
.right{display:grid;grid-template-rows:auto 1fr;min-width:0;min-height:0;padding-left:5px;background:#f4f4f4}
cam-viewport{margin-left:2px}
footer{display:flex;align-items:end;background:linear-gradient(#7b8494 0 1px,#aeb6c6 1px 3px,#d5d8e0 3px 4px,#111 4px 5px,#d0d0d0 5px)}
footer i{height:2px;background:#777;width:54px;border-right:1px solid #111}
footer .sel{flex:1;margin-left:190px;height:6px;border-left:2px solid #111;background:linear-gradient(#c8c8cc 0 1px,#fff 1px 3px,#aaa 3px 4px,#000 4px 5px,#e8e8e8 5px)}
footer .bar{display:block;height:2px;width:343px;margin-left:570px;background:#5a5f8c}
visual-dialog{position:absolute;left:219px;top:47px}
info-window{position:absolute;right:0;top:-12px}
</style>
<cam-ribbon></cam-ribbon>
<main><cam-tree></cam-tree><div class="right"><cam-toolbars></cam-toolbars><cam-viewport></cam-viewport></div></main>
<footer><i></i><span class="sel"><span class="bar"></span></span></footer>
<visual-dialog></visual-dialog><info-window></info-window>`);
</script>
</body>
</html>
